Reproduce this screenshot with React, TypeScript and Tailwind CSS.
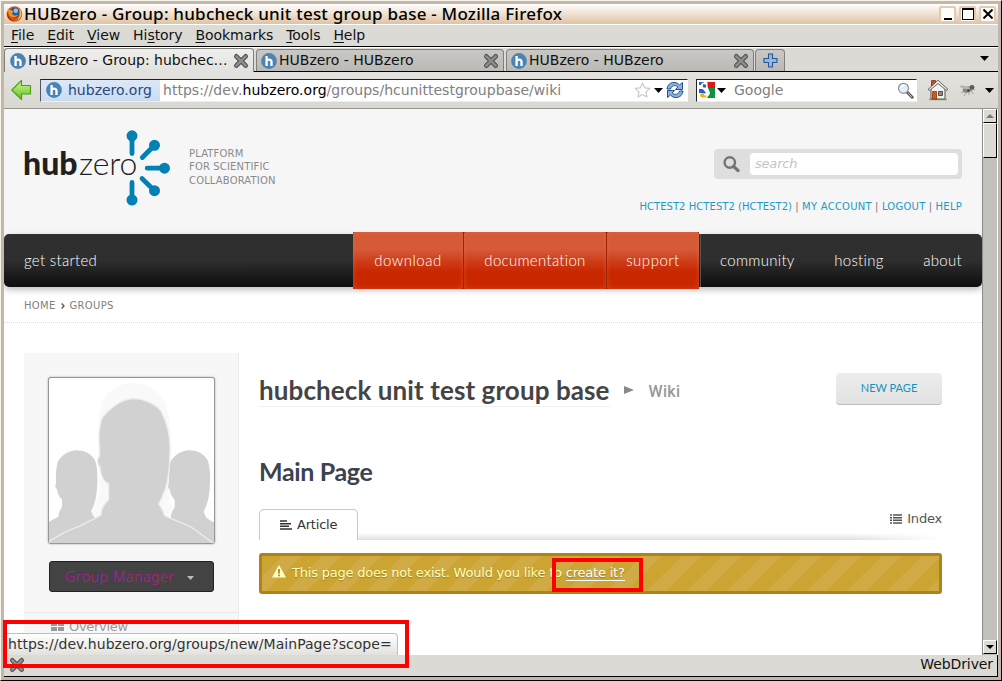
import React from "react";

const HubIcon = () => (
  <svg width="16" height="16" viewBox="0 0 16 16" className="shrink-0">
    <circle cx="8" cy="8" r="7.900" fill="#4a84b4" />
    <path d="M5.600 3v10M5.600 8.600C5.600 6 10.500 5.700 10.500 9V13" stroke="#fff" strokeWidth="2.300" fill="none" />
  </svg>
);

const CloseIcon = () => (
  <svg width="16" height="16" viewBox="0 0 16 16" className="shrink-0">
    <path d="M3.300 3.300 12.700 12.700M12.700 3.300 3.300 12.700" stroke="#4c4f4f" strokeWidth="4.600" strokeLinecap="round" />
    <path d="M3.300 3.300 12.700 12.700M12.700 3.300 3.300 12.700" stroke="#8b8e8c" strokeWidth="2.600" strokeLinecap="round" />
  </svg>
);

const Caret = () => (
  <svg width="9" height="5" viewBox="0 0 9 5" className="shrink-0">
    <path d="M0 0h9L4.500 5z" fill="#000" />
  </svg>
);

const FirefoxIcon = () => (
  <svg width="17" height="16" viewBox="0 0 17 16" className="shrink-0">
    <circle cx="8.500" cy="8" r="7.800" fill="#d9560f" />
    <circle cx="8.500" cy="6.800" r="5.300" fill="#2d5a9e" />
    <circle cx="9.800" cy="4.800" r="2.200" fill="#8fc3e8" />
    <path d="M1.500 2.500C2.500 4 4 3.500 5.500 4.200L7.500 5.500 6 7.500C7 10 10 10 12 8.500 11 12 5 12.500 3 8.500Z" fill="#f3912a" />
    <path d="M13 2.500C17 6 16 12 11 14.500 14 11 14.500 7 13 2.500Z" fill="#f9c440" />
    <path d="M1 6C0 12 5 15.500 9 15 5 14 2.500 11 1 6Z" fill="#b02c0c" />
  </svg>
);

const BackIcon = () => (
  <svg width="22" height="22" viewBox="0 0 22 22" className="shrink-0">
    <defs>
      <linearGradient id="back" x1="0" y1="0" x2="0" y2="1">
        <stop offset="0" stopColor="#d2f3a0" />
        <stop offset="1" stopColor="#5fc416" />
      </linearGradient>
    </defs>
    <path d="M.8 11 10.500 1.500v5h9v8.500h-9v5.500z" fill="url(#back)" stroke="#4ba01a" strokeWidth="1.200" strokeLinejoin="round" />
  </svg>
);

const ReloadIcon = () => (
  <svg width="18" height="18" viewBox="0 0 18 18" className="shrink-0">
    <g fill="#8fb0dc" stroke="#25508f" strokeWidth="1">
      <path d="M1 8C1.500 1 10 -.5 13.500 4L16.500 1.500V8.500H9.500L11.800 6C9.500 3.500 5.500 4.500 4.500 8Z" />
      <path d="M17 10C16.500 17 8 18.500 4.500 14L1.500 16.500V9.500H8.500L6.200 12C8.500 14.500 12.500 13.500 13.500 10Z" />
    </g>
  </svg>
);

const StarIcon = () => (
  <svg width="17" height="17" viewBox="0 0 17 17" className="shrink-0">
    <path d="M8.500 1.200 10.700 5.800 15.800 6.400 12 9.900 13 15.100 8.500 12.600 4 15.100 5 9.900 1.200 6.400 6.300 5.800Z" fill="#fff" stroke="#c9c9c9" strokeWidth="1.200" strokeLinejoin="round" />
  </svg>
);

const GoogleIcon = () => (
  <svg width="16" height="16" viewBox="0 0 16 16" className="shrink-0">
    <path d="M0 0h16v16H0z" fill="#fff" />
    <path d="M8 0h8v6H9z" fill="#e5141a" />
    <path d="M9 6h7v10H8c3-4 3-6 1-10z" fill="#0a943d" />
    <path d="M0 0h5v3H0zM0 7h4l3 4H0z" fill="#2a5fd0" />
    <ellipse cx="4.500" cy="13.300" rx="3.500" ry="2.300" fill="#f6b410" />
    <path d="M8.500 1.500C4 0 2 2.500 3 5s3.500 2 4 2c-1 2 4 2 3 4.500-.5 2-3 1.500-5 1" fill="none" stroke="#fff" strokeWidth="1.700" />
    <circle cx="5.500" cy="4" r="1.800" fill="#2a5fd0" />
  </svg>
);

const MagnifierIcon = () => (
  <svg width="17" height="17" viewBox="0 0 17 17" className="shrink-0">
    <path d="M10 10 15.200 15.200" stroke="#5d5d5d" strokeWidth="3" strokeLinecap="round" />
    <path d="M11 11 15 15" stroke="#b5b5b5" strokeWidth="1" />
    <circle cx="6.500" cy="6.300" r="5" fill="#e4eef8" stroke="#8f9294" strokeWidth="1.200" />
    <path d="M3.500 6C4 4 5.500 3.200 7.500 3.500" stroke="#fff" strokeWidth="1.400" fill="none" />
  </svg>
);

const HomeIcon = () => (
  <svg width="22" height="22" viewBox="0 0 22 22" className="shrink-0">
    <path d="M2 20.500h18" stroke="#84b03c" strokeWidth="1.500" />
    <path d="M4.500 1.500h4v6h-4z" fill="#cc4b26" stroke="#8e2d12" strokeWidth=".8" />
    <path d="M4 9.500 11 3l7 6.500V20H4z" fill="#f1f1ee" stroke="#555" strokeWidth="1" />
    <path d="M1 10.500 11 1.200l10 9.300-1.700.9L11 4.500l-8.300 6.900z" fill="#ededed" stroke="#555" strokeWidth=".9" />
    <path d="M5.500 12.500h4V20h-4z" fill="#d8541c" stroke="#8e3614" strokeWidth=".8" />
    <path d="M11.500 12.500h4v4h-4z" fill="#8b8d8c" stroke="#444" strokeWidth=".9" />
  </svg>
);

const BugIcon = () => (
  <svg width="18" height="14" viewBox="0 0 18 14" className="shrink-0">
    <path d="M1 3 6 6M2 10 6 8M5 13 8 9M10 12 10 8M14 11 12 7M16 7 12 6" stroke="#9c9c99" strokeWidth=".9" />
    <ellipse cx="8.500" cy="6.500" rx="5" ry="3" transform="rotate(-18 8.500 6.500)" fill="#858583" />
    <ellipse cx="6.500" cy="4.500" rx="5" ry="1.500" transform="rotate(12 6.500 4.500)" fill="#b4b4b1" />
    <circle cx="13" cy="4.300" r="2.400" fill="#5a5a59" />
    <circle cx="9.500" cy="7.500" r="1.500" fill="#4e4e4d" />
  </svg>
);

const Spokes = () => (
  <svg width="46" height="78" viewBox="125 129 46 78" className="-ml-[14px] shrink-0">
    <g stroke="#0381b4" strokeWidth="4.800" strokeLinecap="round" fill="#0381b4">
      <path d="M132 136V153.500M154.500 145.300 142.300 157.500M164.500 168.200H147.200M154.500 190.700 142 178.500M132 200V182.500" />
      <g stroke="none">
        <circle cx="132" cy="135.800" r="5.500" />
        <circle cx="154.500" cy="145.300" r="5.500" />
        <circle cx="164.500" cy="168.200" r="5.500" />
        <circle cx="154.500" cy="190.700" r="5.500" />
        <circle cx="132" cy="200" r="5.500" />
      </g>
    </g>
  </svg>
);

const SIDE =
  "M230 330C255 330 275 342 285 360 292 380 293 400 292 430 290 470 285 490 273 513L282 530 340 570V608H147V545C160 535 172 534 176 527 176 510 183 508 186 500V478C176 470 172 455 171 447 165 443 165 435 168 430 167 400 168 385 173 365 185 345 205 330 230 330Z";
const SIDE_RIGHT =
  "M568 330C593 330 613 342 623 360 630 380 631 400 630 430 628 470 623 490 611 513 615 528 618 536 642 546V608H480V560L512 536C512 515 520 508 524 500V478C514 470 510 455 509 447 503 443 503 435 506 430 508 400 508 385 511 365 523 345 543 330 568 330Z";

const Avatar = () => (
  <svg width="165" height="165" viewBox="147 113 495 495">
    <path d="M401 128C450 128 485 160 500 200 514 250 514 300 513 360L508 480 520 500 500 540H290L275 515 300 450C296 400 294 350 295 290 297 240 297 200 312 175 330 145 365 128 401 128Z" fill="#f9f9f9" />
    <path d={SIDE} fill="#d1d1d1" />
    <path d={SIDE_RIGHT} fill="#d1d1d1" />
    <path
      d="M402 175C430 175 465 190 483 212 500 245 510 280 510 320 510 380 505 430 490 460 485 478 476 488 476 491 484 500 490 515 494 526 520 540 560 550 585 568 605 583 625 598 640 608L640 625H147V604C160 595 200 570 238 558 265 543 290 533 303 524 304 500 315 490 326 478V430C312 425 302 405 300 380 292 372 290 358 296 352 298 350 300 330 297 300 297 260 303 240 308 230 330 205 365 175 402 175Z"
      fill="#d1d1d1" stroke="#ececec" strokeWidth="4"
    />
  </svg>
);

const ArticleIcon = () => (
  <svg width="12" height="10" viewBox="0 0 12 10" className="shrink-0">
    <path d="M0 1h7M0 3.700h11M0 6.300h9M0 9h12" stroke="#333" strokeWidth="1.600" />
  </svg>
);

const IndexIcon = () => (
  <svg width="12" height="10" viewBox="0 0 12 10" className="shrink-0">
    <path d="M0 1h2M3 1h9M0 3.700h2M3 3.700h9M0 6.300h2M3 6.300h9M0 9h2M3 9h9" stroke="#555" strokeWidth="1.600" />
  </svg>
);

const MENU: [string, string, string][] = [
  ["", "F", "ile"], ["", "E", "dit"], ["", "V", "iew"], ["Hi", "s", "tory"],
  ["", "B", "ookmarks"], ["", "T", "ools"], ["", "H", "elp"],
];

const winBtn = "flex h-[17px] w-[17px] items-center justify-center rounded-[2px] border-2 border-[#e3cbb0] bg-[#fffdfa]";
const tabBase = "flex items-center rounded-t-[4px] border border-b-0 border-[#7f7f7b]";
const red = "flex h-[57px] items-center justify-center rounded-[2px] bg-linear-to-b from-[#d65a38] from-30% via-[#cd3c17] via-52% to-[#c92700] to-70% text-white shadow-[inset_0_0_5px_rgba(235,110,70,0.5)]";
const navText = "font-['Lato',sans-serif] text-[15px] font-light tracking-[0.500px] text-white";

export default function App() {
  return (
    <div className="relative flex h-[681px] w-[1002px] flex-col overflow-hidden border-t border-r border-b border-l border-t-[#f8f4e8] border-r-black border-b-black border-l-[#f8f4e8] bg-[#c1b7ae] pt-[3px] pr-[3px] pb-[3px] pl-[3px] font-['DejaVu_Sans',sans-serif] text-[14px] text-[#111]">
      <div className="flex h-[20px] shrink-0 items-center bg-linear-to-b from-white to-[#dfc3a4] pl-[2px]">
        <FirefoxIcon />
        <span className="ml-[1px] font-['Noto_Sans',sans-serif] text-[17px] leading-[20px] font-medium tracking-[0.220px] whitespace-pre text-black">HUBzero - Group: hubcheck unit test group base - Mozilla Firefox</span>
        <div className="ml-auto flex gap-[3px] pr-[2px]">
          <div className={winBtn}><div className="mt-[9px] h-[2px] w-[8px] bg-black" /></div>
          <div className={winBtn}><div className="h-[12px] w-[12px] shrink-0 border border-t-2 border-black" /></div>
          <div className={winBtn}>
            <svg width="10" height="10" viewBox="0 0 10 10" className="shrink-0"><path d="M.5 .5 9.500 9.500M9.500 .5 .5 9.500" stroke="#000" strokeWidth="2" /></svg>
          </div>
        </div>
      </div>

      <div className="flex h-[23px] shrink-0 items-center gap-[13px] border-t border-b border-t-white border-b-black bg-[#dcdad5] pl-[7px] tracking-[-0.060px]">
        {MENU.map(([a, b, c]) => (
          <span key={b + c} className="whitespace-pre">{a}<u className="underline decoration-1 underline-offset-2">{b}</u>{c}</span>
        ))}
      </div>

      <div className="flex h-[25px] shrink-0 items-end gap-[2px] border-t border-b border-t-white border-b-black bg-[#dcdad5]">
        <div className={tabBase + " -mb-px h-[24px] w-[250px] bg-linear-to-b from-[#efefed] to-[#e2e1dd] pl-[5px]"}>
          <HubIcon /><span className="ml-[2px] whitespace-nowrap">HUBzero - Group: hubchec…</span>
          <div className="mr-[4px] ml-auto flex"><CloseIcon /></div>
        </div>
        {[0, 1].map((i) => (
          <div key={i} className={tabBase + " h-[22px] w-[248px] bg-linear-to-b from-[#c9c8c4] to-[#bab9b5] pl-[4px]"}>
            <HubIcon /><span className="ml-[2px] whitespace-nowrap">HUBzero - HUBzero</span>
            <div className="mr-[4px] ml-auto flex"><CloseIcon /></div>
          </div>
        ))}
        <div className={tabBase + " -ml-px h-[22px] w-[30px] justify-center bg-linear-to-b from-[#c9c8c4] to-[#bab9b5]"}>
          <svg width="15" height="15" viewBox="0 0 15 15"><path d="M5.500 1h4v4.500H14v4H9.500V14h-4V9.500H1v-4h4.500z" fill="#92b8e6" stroke="#2a558f" strokeWidth="1.100" /></svg>
        </div>
        <div className="mr-[9px] mb-[10px] ml-auto"><Caret /></div>
      </div>

      <div className="flex h-[37px] shrink-0 items-center border-b border-[#96948f] bg-linear-to-b from-[#e3e2de] to-[#d9d7d2] pl-[7px]">
        <BackIcon />
        <div className="ml-[7px] flex h-[23px] w-[648px] items-center border border-t-[#222] border-r-white border-b-[#eee] border-l-[#555] bg-white">
          <div className="flex h-full w-[119px] items-center bg-linear-to-b from-[#dce8f8] to-[#cbdcf2] pl-[5px] text-[#29487d]">
            <HubIcon /><span className="ml-[6px]">hubzero.org</span>
          </div>
          <span className="ml-[3px] whitespace-nowrap text-[#808080] tracking-[0.020px]">https://dev.<span className="text-black">hubzero.org</span>/groups/hcunittestgroupbase/wiki</span>
          <div className="ml-auto flex items-center gap-[3px] pr-[3px]"><StarIcon /><Caret /><ReloadIcon /></div>
        </div>
        <div className="ml-[8px] flex h-[23px] w-[221px] items-center border border-t-[#222] border-r-white border-b-[#eee] border-l-[#222] bg-white pr-[2px] pl-[2px]">
          <GoogleIcon /><div className="w-[2px]" /><Caret />
          <span className="ml-[8px] text-[#808080]">Google</span>
          <div className="ml-auto"><MagnifierIcon /></div>
        </div>
        <div className="ml-[10px] flex items-center"><HomeIcon /><div className="w-[10px]" /><BugIcon /><div className="w-[8px]" /><Caret /></div>
      </div>

      <div className="flex h-[546px] shrink-0">
        <div className="flex w-[978px] shrink-0 flex-col overflow-hidden bg-white">
          <div className="flex h-[125px] shrink-0 justify-between bg-[#f6f6f6] pr-[20px] pl-[19px]">
            <div className="flex h-[118px] items-center">
              <div className="-mt-[10px] flex items-center font-['Lato',sans-serif] text-[32px] leading-[36px] text-[#231f20]">
                <span className="w-[56px] font-black">hub</span>
                <span className="w-[60px] font-light tracking-[-0.200px]">zero</span>
              </div>
              <Spokes />
              <div className="-mt-[2px] ml-[18px] text-[10px] leading-[13.500px] tracking-[0.150px] text-[#8a8a8a]">PLATFORM<br />FOR SCIENTIFIC<br />COLLABORATION</div>
            </div>
            <div className="flex flex-col items-end pt-[40px]">
              <div className="flex h-[30px] w-[248px] items-center rounded-[4px] bg-[#dedede] pr-[4px] pl-[9px]">
                <svg width="17" height="17" viewBox="0 0 17 17"><circle cx="6.800" cy="6.500" r="5.200" fill="none" stroke="#747474" strokeWidth="2.400" /><path d="M10.500 10.300 15 14.500" stroke="#747474" strokeWidth="3.200" strokeLinecap="round" /></svg>
                <div className="ml-auto flex h-[22px] w-[208px] items-center rounded-[4px] bg-white pl-[5px] text-[13px] tracking-[-0.200px] text-[#c4c4c4] italic">search</div>
              </div>
              <div className="mt-[21px] flex gap-[3.200px] text-[10px] leading-[13px] tracking-[0.250px] whitespace-nowrap text-[#777]">
                <span className="tracking-[0.050px] text-[#1a9bc4]">HCTEST2 HCTEST2 (HCTEST2)</span><span>|</span><span className="text-[#1a9bc4]">MY ACCOUNT</span><span>|</span><span className="text-[#1a9bc4]">LOGOUT</span><span>|</span><span className="text-[#1a9bc4]">HELP</span>
              </div>
            </div>
          </div>

          <div className={"z-10 flex h-[53px] shrink-0 items-center rounded-[5px] bg-linear-to-b from-[#303030] via-[#2e2e2e] via-50% to-[#0e0e0e] pl-[20px] shadow-[0_3px_6px_rgba(0,0,0,0.25)] " + navText}>
            <span className="w-[329px] tracking-[0.300px]">get started</span>
            <div className="flex gap-px bg-[#9c2509]">
              <div className={red + " w-[110px]"}>download</div>
              <div className={red + " w-[142px] tracking-[0.300px]"}>documentation</div>
              <div className={red + " w-[92px]"}>support</div>
            </div>
            <div className="ml-px h-full w-px bg-[#555]" />
            <div className="flex flex-1 justify-between pr-[20px] pl-[19px] tracking-[0.300px]"><span>community</span><span>hosting</span><span>about</span></div>
          </div>

          <div className="flex h-[36px] shrink-0 items-center border-b border-dotted border-[#ddd] pt-[2px] pl-[20px] text-[10px] tracking-[0.300px] text-[#808080]">
            HOME<svg width="4" height="6" viewBox="0 0 4 6" className="mx-[5px]"><path d="M.7 .5 3 3 .7 5.500" stroke="#555" strokeWidth="1.300" fill="none" /></svg>GROUPS
          </div>

          <div className="flex flex-1 pt-[30px] pl-[20px]">
            <div className="flex h-[302px] w-[215px] shrink-0 flex-col border-r border-[#ebebeb] bg-[#f7f7f7]">
              <div className="mt-[24px] ml-[24px] h-[167px] w-[167px] overflow-hidden rounded-[3px] border border-[#979797] bg-white shadow-[0_0_2px_#999]"><Avatar /></div>
              <div className="mt-[17px] ml-[25px] flex h-[31px] w-[165px] items-center rounded-[3px] border border-[#222] bg-[#434343] pl-[15px] font-['Noto_Sans',sans-serif] text-[14px] tracking-[0.650px] text-[#c0149f]">
                <span className="font-light">Group Manager</span>
                <svg width="7" height="4" viewBox="0 0 7 4" className="mt-[2px] ml-[12px]"><path d="M0 0h7L3.500 4z" fill="#bbb" /></svg>
              </div>
              <div className="mt-[20px] flex h-[30px] items-start border-t border-[#e8e8e8] pt-[5px] pl-[27px] text-[13px] leading-[17px] tracking-[-0.300px] text-[#999]">
                <svg width="13" height="9" viewBox="0 0 13 9" className="mt-[4px] mr-[5px]"><path d="M0 0h6v4H0zM7 0h6v4H7zM0 5h6v4H0zM7 5h6v4H7z" fill="#999" /></svg>
                Overview
              </div>
            </div>

            <div className="ml-[20px] flex w-[683px] flex-col">
              <div className="flex h-[72px] items-center">
                <div className="h-[35px] border-b border-[#f1f1f1] font-['Lato',sans-serif] text-[26px] leading-[36px] font-bold tracking-[0.100px] whitespace-nowrap text-[#444]">hubcheck unit test group base</div>
                <svg width="10" height="8" viewBox="0 0 10 8" className="mt-px ml-[14px]"><path d="M0 0 10 4 0 8z" fill="#888" /></svg>
                <span className="mt-[6px] ml-[15px] font-['Roboto',sans-serif] text-[16px] font-medium tracking-[0.300px] text-[#999]">Wiki</span>
                <div className="ml-auto flex h-[32px] w-[106px] items-center justify-center rounded-[4px] border-b border-[#bdbdbd] bg-linear-to-b from-[#ececec] to-[#e2e2e2] font-['Lato',sans-serif] text-[11px] text-[#0f95bd]">NEW PAGE</div>
              </div>
              <div className="mt-[28px] h-[36px] font-['Lato',sans-serif] text-[25px] leading-[36px] font-bold tracking-[-0.350px] text-[#3c424e]">Main Page</div>
              <div className="mt-[20px] flex h-[31px] items-stretch">
                <div className="flex w-[99px] items-center rounded-t-[5px] border border-b-0 border-[#c8c8c8] bg-white pl-[20px] text-[13px] tracking-[-0.200px] text-[#333]">
                  <ArticleIcon /><span className="ml-[5px]">Article</span>
                </div>
                <div className="flex flex-1 flex-col justify-between text-[13px] text-[#555]">
                  <div className="flex h-[20px] items-center justify-end tracking-[-0.200px]"><IndexIcon /><span className="ml-[5px]">Index</span></div>
                  <div className="h-[7px] bg-linear-to-b from-white to-[#dfdfdf] mask-r-from-85%" />
                </div>
              </div>
              <div className="mt-[13px] flex h-[41px] items-center rounded-[3px] border-[3px] border-[#ae8318] bg-[#cca432] bg-[linear-gradient(-45deg,#d0ab45_25%,transparent_25%,transparent_50%,#d0ab45_50%,#d0ab45_75%,transparent_75%)] bg-[length:40px_40px] pb-px pl-[10px] text-[13px] tracking-[-0.210px] text-[#ffffb8]">
                <svg width="14" height="13" viewBox="0 0 14 13" className="-mt-[3px]"><path d="M7 0 14 12.500H0z" fill="#ffffc0" /><path d="M7 4v4.500M7 9.500v1.700" stroke="#a8811d" strokeWidth="1.700" /></svg>
                <span className="ml-[6px] whitespace-nowrap [text-shadow:0_1px_1px_rgba(0,0,0,0.25)]">This page does not exist. Would you like to <span className="border-b border-white text-white">create it?</span></span>
              </div>
            </div>
          </div>
        </div>

        <div className="flex w-[16px] flex-col border-l border-[#8c8b87] border-r border-r-white bg-[#c2c0bb]">
          <div className="flex h-[14px] items-center justify-center border-t border-r border-b border-l border-t-white border-r-black border-b-black border-l-white bg-[#dcdad5]"><svg width="8" height="4" viewBox="0 0 8 4"><path d="M0 4h8L4 0z" fill="#777" /></svg></div>
          <div className="h-[35px] border-t border-r border-b border-l border-t-white border-r-black border-b-black border-l-white bg-[#dcdad5]" />
          <div className="mt-auto mb-px flex h-[14px] items-center justify-center border-t border-r border-b border-l border-t-white border-r-black border-b-black border-l-white bg-[#dcdad5]"><svg width="8" height="4" viewBox="0 0 8 4"><path d="M0 0h8L4 4z" fill="#000" /></svg></div>
        </div>
      </div>

      <div className="flex h-[22px] shrink-0 items-center justify-between border-r border-b border-black bg-[#dcdad5] pr-[4px] pb-[2px] pl-[5px]">
        <CloseIcon /><span className="tracking-[-0.100px]">WebDriver</span>
      </div>

      <div className="absolute top-[632px] left-[3px] z-20 flex h-[22px] w-[394px] items-center rounded-tr-[4px] border-t border-r border-[#bdbdb9] bg-linear-to-b from-white to-[#e2e1dd] pl-[4px] tracking-[0.040px] whitespace-nowrap text-[#333]">https://dev.hubzero.org/groups/new/MainPage?scope=</div>
      <div className="absolute top-[619px] left-[2px] z-30 h-[48px] w-[406px] border-4 border-[#ff0000]" />
      <div className="absolute top-[557px] left-[551px] z-30 h-[34px] w-[91px] border-4 border-[#ff0000]" />
    </div>
  );
}
